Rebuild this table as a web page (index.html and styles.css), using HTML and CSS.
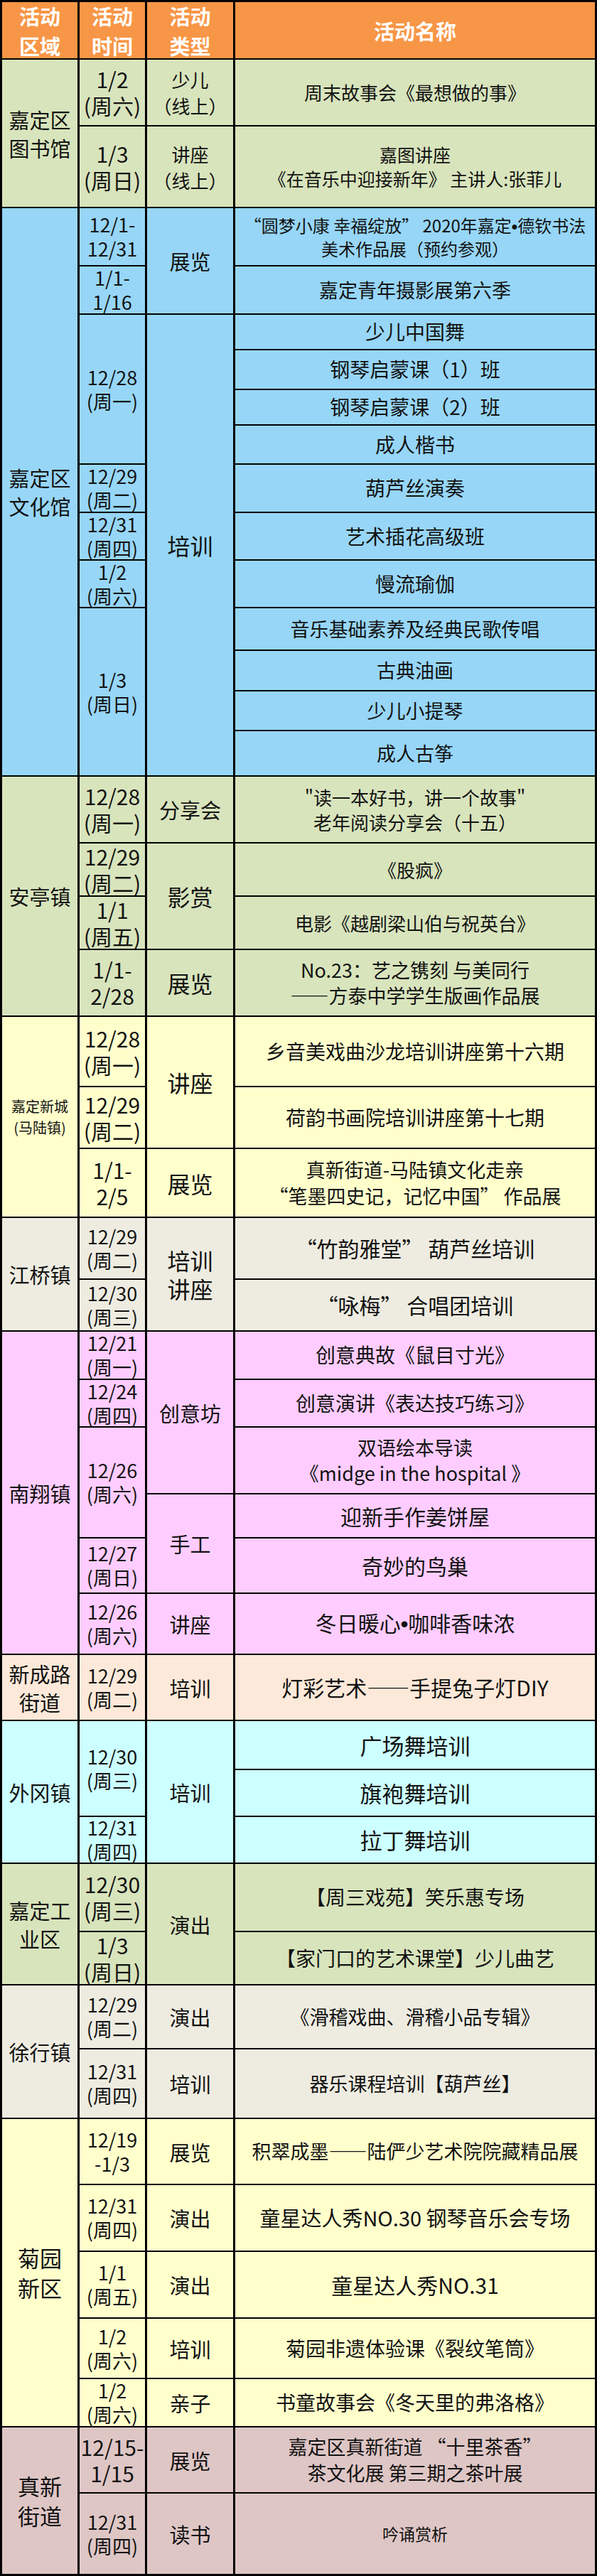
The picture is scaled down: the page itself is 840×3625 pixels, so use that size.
FILE: index.html
```html
<!DOCTYPE html>
<html lang="zh-CN">
<head>
<meta charset="utf-8">
<title>活动安排</title>
<link rel="stylesheet" href="styles.css">
</head>
<body>
<div class="sheet">
  <div class="hd"><span>活动<br>区域</span></div>
  <div class="hd"><span>活动<br>时间</span></div>
  <div class="hd"><span>活动<br>类型</span></div>
  <div class="hd"><span>活动名称</span></div>

  <div class="sec lib">
    <div class="cell reg r2"><span>嘉定区<br>图书馆</span></div>
    <div class="cell date dl"><span>1/2<br>(周六)</span></div>
    <div class="cell type ts"><span>少儿<br>（线上）</span></div>
    <div class="cell name f26"><span>周末故事会《最想做的事》</span></div>
    <div class="cell date dl"><span>1/3<br>(周日)</span></div>
    <div class="cell type ts"><span>讲座<br>（线上）</span></div>
    <div class="cell name f25"><span>嘉图讲座<br>《在音乐中迎接新年》 主讲人:张菲儿</span></div>
  </div>

  <div class="sec cul">
    <div class="cell reg r13"><span>嘉定区<br>文化馆</span></div>
    <div class="cell date"><span>12/1-<br>12/31</span></div>
    <div class="cell type r2"><span>展览</span></div>
    <div class="cell name f24 tight"><span>“圆梦小康 幸福绽放” 2020年嘉定<b class="dot">•</b>德钦书法<br>美术作品展（预约参观）</span></div>
    <div class="cell date"><span>1/1-<br>1/16</span></div>
    <div class="cell name f27"><span>嘉定青年摄影展第六季</span></div>
    <div class="cell date r4"><span>12/28<br>(周一)</span></div>
    <div class="cell type tb r11"><span>培训</span></div>
    <div class="cell name f28"><span>少儿中国舞</span></div>
    <div class="cell name f28"><span>钢琴启蒙课（1）班</span></div>
    <div class="cell name f28"><span>钢琴启蒙课（2）班</span></div>
    <div class="cell name f28"><span>成人楷书</span></div>
    <div class="cell date"><span>12/29<br>(周二)</span></div>
    <div class="cell name f28"><span>葫芦丝演奏</span></div>
    <div class="cell date"><span>12/31<br>(周四)</span></div>
    <div class="cell name f28"><span>艺术插花高级班</span></div>
    <div class="cell date"><span>1/2<br>(周六)</span></div>
    <div class="cell name f28"><span>慢流瑜伽</span></div>
    <div class="cell date r4"><span>1/3<br>(周日)</span></div>
    <div class="cell name f27"><span>音乐基础素养及经典民歌传唱</span></div>
    <div class="cell name f27"><span>古典油画</span></div>
    <div class="cell name f27"><span>少儿小提琴</span></div>
    <div class="cell name f27"><span>成人古筝</span></div>
  </div>

  <div class="sec ant">
    <div class="cell reg r4"><span>安亭镇</span></div>
    <div class="cell date dl"><span>12/28<br>(周一)</span></div>
    <div class="cell type"><span>分享会</span></div>
    <div class="cell name f26"><span>"读一本好书，讲一个故事"<br>老年阅读分享会（十五）</span></div>
    <div class="cell date dl"><span>12/29<br>(周二)</span></div>
    <div class="cell type tb r2"><span>影赏</span></div>
    <div class="cell name f26"><span>《股疯》</span></div>
    <div class="cell date dl"><span>1/1<br>(周五)</span></div>
    <div class="cell name f26"><span>电影《越剧梁山伯与祝英台》</span></div>
    <div class="cell date dl"><span>1/1-<br>2/28</span></div>
    <div class="cell type tb"><span>展览</span></div>
    <div class="cell name f27"><span>No.23：艺之镌刻 与美同行<br>——方泰中学学生版画作品展</span></div>
  </div>

  <div class="sec ncity">
    <div class="cell reg regs r3"><span>嘉定新城<br>(马陆镇)</span></div>
    <div class="cell date dl"><span>12/28<br>(周一)</span></div>
    <div class="cell type tb r2"><span>讲座</span></div>
    <div class="cell name f28"><span>乡音美戏曲沙龙培训讲座第十六期</span></div>
    <div class="cell date dl"><span>12/29<br>(周二)</span></div>
    <div class="cell name f28"><span>荷韵书画院培训讲座第十七期</span></div>
    <div class="cell date dl"><span>1/1-<br>2/5</span></div>
    <div class="cell type tb"><span>展览</span></div>
    <div class="cell name f27"><span>真新街道-马陆镇文化走亲<br>“笔墨四史记，记忆中国” 作品展</span></div>
  </div>

  <div class="sec jq">
    <div class="cell reg r2"><span>江桥镇</span></div>
    <div class="cell date"><span>12/29<br>(周二)</span></div>
    <div class="cell type tb r2"><span>培训<br>讲座</span></div>
    <div class="cell name f30"><span>“竹韵雅堂” 葫芦丝培训</span></div>
    <div class="cell date"><span>12/30<br>(周三)</span></div>
    <div class="cell name f30"><span>“咏梅” 合唱团培训</span></div>
  </div>

  <div class="sec nx">
    <div class="cell reg r6"><span>南翔镇</span></div>
    <div class="cell date"><span>12/21<br>(周一)</span></div>
    <div class="cell type r3"><span>创意坊</span></div>
    <div class="cell name f28"><span>创意典故《鼠目寸光》</span></div>
    <div class="cell date"><span>12/24<br>(周四)</span></div>
    <div class="cell name f28"><span>创意演讲《表达技巧练习》</span></div>
    <div class="cell date r2"><span>12/26<br>(周六)</span></div>
    <div class="cell name f27"><span>双语绘本导读<br>《midge in the hospital 》</span></div>
    <div class="cell type r2"><span>手工</span></div>
    <div class="cell name f30"><span>迎新手作姜饼屋</span></div>
    <div class="cell date"><span>12/27<br>(周日)</span></div>
    <div class="cell name f30"><span>奇妙的鸟巢</span></div>
    <div class="cell date"><span>12/26<br>(周六)</span></div>
    <div class="cell type"><span>讲座</span></div>
    <div class="cell name f30"><span>冬日暖心<b class="dot">•</b>咖啡香味浓</span></div>
  </div>

  <div class="sec xcl">
    <div class="cell reg"><span>新成路<br>街道</span></div>
    <div class="cell date"><span>12/29<br>(周二)</span></div>
    <div class="cell type"><span>培训</span></div>
    <div class="cell name f30"><span>灯彩艺术——手提兔子灯DIY</span></div>
  </div>

  <div class="sec wg">
    <div class="cell reg r3"><span>外冈镇</span></div>
    <div class="cell date r2"><span>12/30<br>(周三)</span></div>
    <div class="cell type r3"><span>培训</span></div>
    <div class="cell name f31"><span>广场舞培训</span></div>
    <div class="cell name f31"><span>旗袍舞培训</span></div>
    <div class="cell date"><span>12/31<br>(周四)</span></div>
    <div class="cell name f31"><span>拉丁舞培训</span></div>
  </div>

  <div class="sec ind">
    <div class="cell reg r2"><span>嘉定工<br>业区</span></div>
    <div class="cell date dl"><span>12/30<br>(周三)</span></div>
    <div class="cell type r2"><span>演出</span></div>
    <div class="cell name f28"><span>【周三戏苑】笑乐惠专场</span></div>
    <div class="cell date dl"><span>1/3<br>(周日)</span></div>
    <div class="cell name f28"><span>【家门口的艺术课堂】少儿曲艺</span></div>
  </div>

  <div class="sec xh">
    <div class="cell reg r2"><span>徐行镇</span></div>
    <div class="cell date"><span>12/29<br>(周二)</span></div>
    <div class="cell type"><span>演出</span></div>
    <div class="cell name f27"><span>《滑稽戏曲、滑稽小品专辑》</span></div>
    <div class="cell date"><span>12/31<br>(周四)</span></div>
    <div class="cell type"><span>培训</span></div>
    <div class="cell name f27"><span>器乐课程培训【葫芦丝】</span></div>
  </div>

  <div class="sec jy">
    <div class="cell reg reg2 r5"><span>菊园<br>新区</span></div>
    <div class="cell date"><span>12/19<br>-1/3</span></div>
    <div class="cell type"><span>展览</span></div>
    <div class="cell name f27"><span>积翠成墨——陆俨少艺术院院藏精品展</span></div>
    <div class="cell date"><span>12/31<br>(周四)</span></div>
    <div class="cell type"><span>演出</span></div>
    <div class="cell name f29"><span>童星达人秀NO.30 钢琴音乐会专场</span></div>
    <div class="cell date"><span>1/1<br>(周五)</span></div>
    <div class="cell type"><span>演出</span></div>
    <div class="cell name f30"><span>童星达人秀NO.31</span></div>
    <div class="cell date"><span>1/2<br>(周六)</span></div>
    <div class="cell type"><span>培训</span></div>
    <div class="cell name f28"><span>菊园非遗体验课《裂纹笔筒》</span></div>
    <div class="cell date"><span>1/2<br>(周六)</span></div>
    <div class="cell type"><span>亲子</span></div>
    <div class="cell name f28"><span>书童故事会《冬天里的弗洛格》</span></div>
  </div>

  <div class="sec zx">
    <div class="cell reg reg2 r2"><span>真新<br>街道</span></div>
    <div class="cell date dl"><span>12/15-<br>1/15</span></div>
    <div class="cell type"><span>展览</span></div>
    <div class="cell name f27"><span>嘉定区真新街道 “十里茶香”<br>茶文化展 第三期之茶叶展</span></div>
    <div class="cell date"><span>12/31<br>(周四)</span></div>
    <div class="cell type"><span>读书</span></div>
    <div class="cell name f23"><span>吟诵赏析</span></div>
  </div>
</div>
</body>
</html>
```

FILE: styles.css
```css
html, body {
  margin: 0;
  padding: 0;
  background: #ffffff;
}

.sheet {
  box-sizing: border-box;
  width: 840px;
  display: grid;
  grid-template-columns: 106px 92px 121px 506px;
  grid-template-rows:
    79px
    92px 113px
    80px 66px 48px 54px 48px 53px 66px 65px 65px 58px 55px 54px 62px
    92px 73px 73px 92px
    97px 85px 95px
    85px 71px
    66px 65px 92px 60px 76px 84px
    91px
    67px 64px 64px
    94px 73px
    88px 96px
    91px 92px 92px 83px 66px
    91px 113px;
  column-gap: 3px;
  row-gap: 2px;
  padding: 3px;
  background: #000000;
  font-family: "Noto Sans CJK SC", "Microsoft YaHei", sans-serif;
  color: #121212;
}

.sec { display: contents; }

.lib   { --bg: #d8e4bc; }
.cul   { --bg: #97d6f7; }
.ant   { --bg: #d8e4bc; }
.ncity { --bg: #ffffcc; }
.jq    { --bg: #eeece1; }
.nx    { --bg: #ffccff; }
.xcl   { --bg: #fde9d9; }
.wg    { --bg: #ccffff; }
.ind   { --bg: #d8e4bc; }
.xh    { --bg: #eeece1; }
.jy    { --bg: #ffffcc; }
.zx    { --bg: #dec6c5; }

.hd, .cell {
  display: flex;
  align-items: center;
  justify-content: center;
  text-align: center;
  white-space: nowrap;
  overflow: visible;
}

.hd {
  background: #f79646;
  color: #ffffff;
  font-weight: 700;
  font-size: 29px;
  line-height: 42px;
}

.cell {
  background: var(--bg);
}

.dot {
  font-family: "Liberation Sans", sans-serif;
  font-weight: 700;
}

.r2  { grid-row: span 2; }
.r3  { grid-row: span 3; }
.r4  { grid-row: span 4; }
.r5  { grid-row: span 5; }
.r6  { grid-row: span 6; }
.r11 { grid-row: span 11; }
.r13 { grid-row: span 13; }

/* region column */
.reg {
  font-size: 29px;
  line-height: 40px;
}
.reg2 {
  font-size: 31px;
  line-height: 42px;
}
.regs {
  font-size: 20px;
  line-height: 30px;
}

/* date column */
.date {
  font-size: 27px;
  line-height: 34px;
}
.dl {
  font-size: 30px;
  line-height: 37px;
}

/* type column */
.type {
  font-size: 29px;
  line-height: 38px;
}
.tb { font-size: 32px; line-height: 40px; }
.ts { font-size: 26px; line-height: 37px; }

/* activity name column */
.name { line-height: 1.35; }
.tight { line-height: 1.3; }
.f23 { font-size: 23px; }
.f24 { font-size: 24px; }
.f25 { font-size: 25px; }
.f26 { font-size: 26px; }
.f27 { font-size: 27px; }
.f28 { font-size: 28px; }
.f29 { font-size: 29px; }
.f30 { font-size: 30px; }
.f31 { font-size: 31px; }
```
